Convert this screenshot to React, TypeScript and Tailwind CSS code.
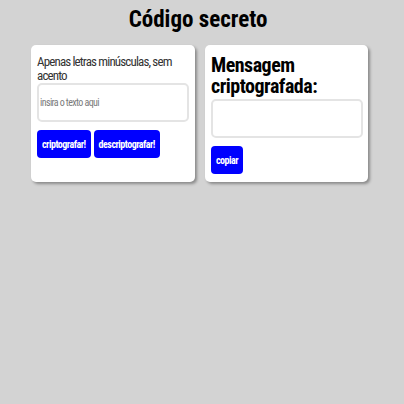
/**
 * Código secreto — two white cards on a grey page: the input on the left,
 * the encrypted result on the right. Buttons are inert.
 */
export default function App() {
  return (
    <div className="min-h-[404px] w-full bg-[#d3d3d3] font-['Roboto_Condensed','Roboto',sans-serif] text-black">
      <h1 className="pr-[8px] pt-[6px] text-center text-[23px] font-bold leading-[27px]">Código secreto</h1>

      <div className="mt-[12px] flex gap-[10px] pl-[31px]">
        {/* Left — text to encrypt */}
        <div className="flex h-[137px] w-[164px] flex-col rounded-[5px] bg-white px-[6px] pt-[10px] shadow-[2px_2px_3px_rgba(0,0,0,0.35)]">
          <p className="text-[13px] leading-[14px] tracking-[-0.85px] text-[#333]">
            Apenas letras minúsculas, sem acento
          </p>
          <input
            className="h-[39px] w-[152px] rounded-[5px] border-2 border-[#e4e4e4] px-[1px] text-[10px] tracking-[-0.6px] outline-none placeholder:text-[#7a7a7a]"
            placeholder="insira o texto aqui"
          />
          <div className="mt-[8px] flex gap-[3px]">
            <button className="h-[28px] rounded-[4px] bg-[#0000ff] px-[5px] text-[10px] font-bold tracking-[-0.5px] text-white">
              criptografar!
            </button>
            <button className="h-[28px] rounded-[4px] bg-[#0000ff] px-[5px] text-[10px] font-bold tracking-[-0.5px] text-white">
              descriptografar!
            </button>
          </div>
        </div>

        {/* Right — result */}
        <div className="flex h-[137px] w-[163px] flex-col rounded-[5px] bg-white px-[6px] pt-[10px] shadow-[2px_2px_3px_rgba(0,0,0,0.35)]">
          <h2 className="text-[20px] font-bold leading-[21px] tracking-[-0.5px]">Mensagem criptografada:</h2>
          <textarea className="mt-[2px] h-[39px] w-[152px] resize-none rounded-[5px] border-2 border-[#e4e4e4] outline-none" />
          <div className="mt-[8px]">
            <button className="h-[28px] rounded-[4px] bg-[#0000ff] px-[5px] text-[10px] font-bold tracking-[-0.5px] text-white">
              copiar
            </button>
          </div>
        </div>
      </div>
    </div>
  );
}
